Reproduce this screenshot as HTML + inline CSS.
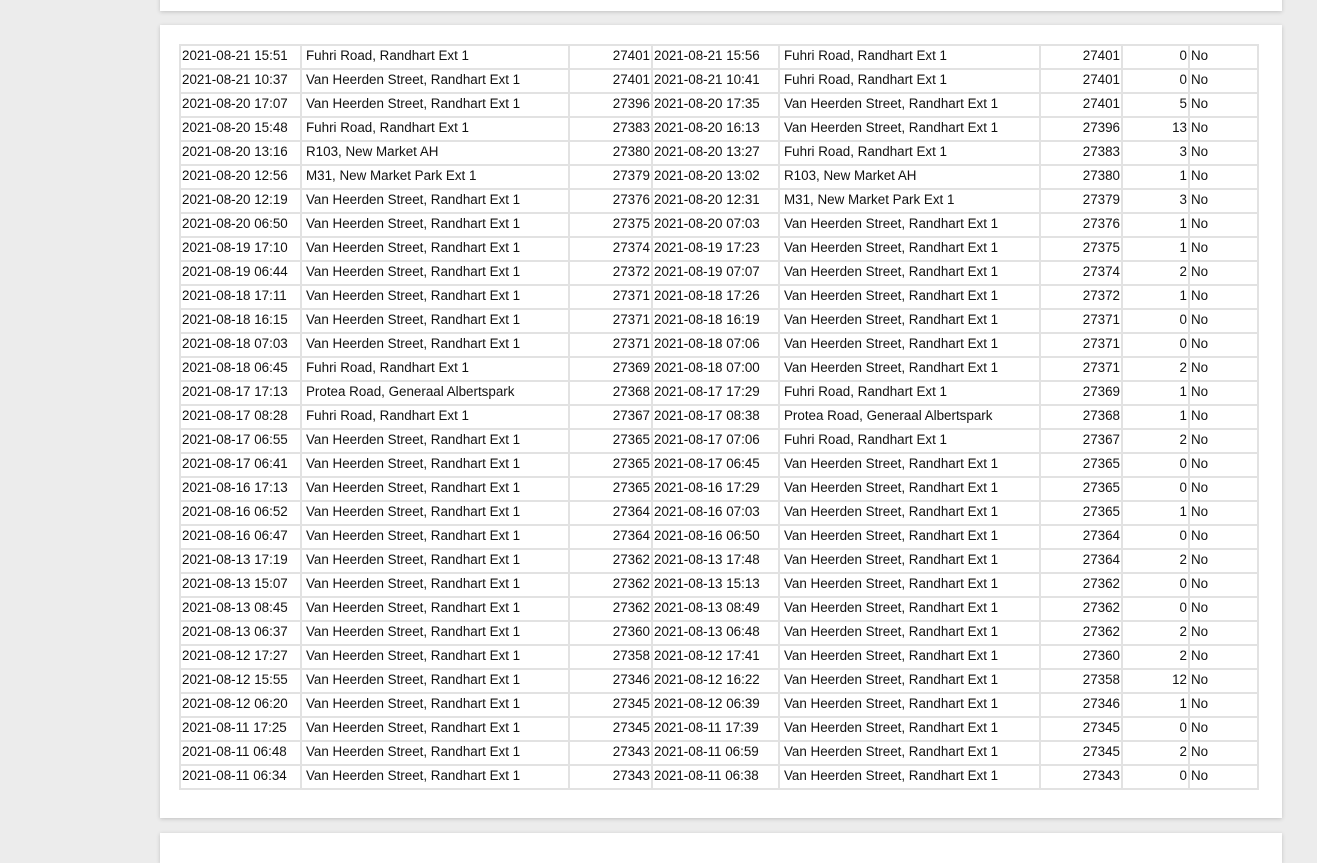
<!DOCTYPE html>
<html><head><meta charset="utf-8"><style>
html,body{margin:0;padding:0;background:#ececec;width:1317px;height:847px;overflow:hidden;font-family:"Liberation Sans",Arial,sans-serif;}
.pg{position:absolute;left:160px;width:1122px;background:#fff;box-shadow:0 1px 4px rgba(0,0,0,.18);}
table{position:absolute;left:179px;top:44px;border-collapse:collapse;table-layout:fixed;font-size:13.4px;color:#111;}
td{border:2px solid #e2e2e2;height:20px;padding:0 1px 2px 1px;white-space:nowrap;overflow:hidden;line-height:19px;vertical-align:top;}
td.r{text-align:right;}
td.a{padding-left:4px;}
</style></head><body>
<div class="pg" style="top:-10px;height:21px"></div>
<div class="pg" style="top:25px;height:793px"></div>
<div class="pg" style="top:833px;height:30px"></div>
<table>
<colgroup><col style="width:121px"><col style="width:268px"><col style="width:83px"><col style="width:127px"><col style="width:261px"><col style="width:82px"><col style="width:67px"><col style="width:69px"></colgroup>
<tbody id="b">
<tr><td>2021-08-21 15:51</td><td class="a">Fuhri Road, Randhart Ext 1</td><td class="r">27401</td><td>2021-08-21 15:56</td><td class="a">Fuhri Road, Randhart Ext 1</td><td class="r">27401</td><td class="r">0</td><td>No</td></tr>
<tr><td>2021-08-21 10:37</td><td class="a">Van Heerden Street, Randhart Ext 1</td><td class="r">27401</td><td>2021-08-21 10:41</td><td class="a">Fuhri Road, Randhart Ext 1</td><td class="r">27401</td><td class="r">0</td><td>No</td></tr>
<tr><td>2021-08-20 17:07</td><td class="a">Van Heerden Street, Randhart Ext 1</td><td class="r">27396</td><td>2021-08-20 17:35</td><td class="a">Van Heerden Street, Randhart Ext 1</td><td class="r">27401</td><td class="r">5</td><td>No</td></tr>
<tr><td>2021-08-20 15:48</td><td class="a">Fuhri Road, Randhart Ext 1</td><td class="r">27383</td><td>2021-08-20 16:13</td><td class="a">Van Heerden Street, Randhart Ext 1</td><td class="r">27396</td><td class="r">13</td><td>No</td></tr>
<tr><td>2021-08-20 13:16</td><td class="a">R103, New Market AH</td><td class="r">27380</td><td>2021-08-20 13:27</td><td class="a">Fuhri Road, Randhart Ext 1</td><td class="r">27383</td><td class="r">3</td><td>No</td></tr>
<tr><td>2021-08-20 12:56</td><td class="a">M31, New Market Park Ext 1</td><td class="r">27379</td><td>2021-08-20 13:02</td><td class="a">R103, New Market AH</td><td class="r">27380</td><td class="r">1</td><td>No</td></tr>
<tr><td>2021-08-20 12:19</td><td class="a">Van Heerden Street, Randhart Ext 1</td><td class="r">27376</td><td>2021-08-20 12:31</td><td class="a">M31, New Market Park Ext 1</td><td class="r">27379</td><td class="r">3</td><td>No</td></tr>
<tr><td>2021-08-20 06:50</td><td class="a">Van Heerden Street, Randhart Ext 1</td><td class="r">27375</td><td>2021-08-20 07:03</td><td class="a">Van Heerden Street, Randhart Ext 1</td><td class="r">27376</td><td class="r">1</td><td>No</td></tr>
<tr><td>2021-08-19 17:10</td><td class="a">Van Heerden Street, Randhart Ext 1</td><td class="r">27374</td><td>2021-08-19 17:23</td><td class="a">Van Heerden Street, Randhart Ext 1</td><td class="r">27375</td><td class="r">1</td><td>No</td></tr>
<tr><td>2021-08-19 06:44</td><td class="a">Van Heerden Street, Randhart Ext 1</td><td class="r">27372</td><td>2021-08-19 07:07</td><td class="a">Van Heerden Street, Randhart Ext 1</td><td class="r">27374</td><td class="r">2</td><td>No</td></tr>
<tr><td>2021-08-18 17:11</td><td class="a">Van Heerden Street, Randhart Ext 1</td><td class="r">27371</td><td>2021-08-18 17:26</td><td class="a">Van Heerden Street, Randhart Ext 1</td><td class="r">27372</td><td class="r">1</td><td>No</td></tr>
<tr><td>2021-08-18 16:15</td><td class="a">Van Heerden Street, Randhart Ext 1</td><td class="r">27371</td><td>2021-08-18 16:19</td><td class="a">Van Heerden Street, Randhart Ext 1</td><td class="r">27371</td><td class="r">0</td><td>No</td></tr>
<tr><td>2021-08-18 07:03</td><td class="a">Van Heerden Street, Randhart Ext 1</td><td class="r">27371</td><td>2021-08-18 07:06</td><td class="a">Van Heerden Street, Randhart Ext 1</td><td class="r">27371</td><td class="r">0</td><td>No</td></tr>
<tr><td>2021-08-18 06:45</td><td class="a">Fuhri Road, Randhart Ext 1</td><td class="r">27369</td><td>2021-08-18 07:00</td><td class="a">Van Heerden Street, Randhart Ext 1</td><td class="r">27371</td><td class="r">2</td><td>No</td></tr>
<tr><td>2021-08-17 17:13</td><td class="a">Protea Road, Generaal Albertspark</td><td class="r">27368</td><td>2021-08-17 17:29</td><td class="a">Fuhri Road, Randhart Ext 1</td><td class="r">27369</td><td class="r">1</td><td>No</td></tr>
<tr><td>2021-08-17 08:28</td><td class="a">Fuhri Road, Randhart Ext 1</td><td class="r">27367</td><td>2021-08-17 08:38</td><td class="a">Protea Road, Generaal Albertspark</td><td class="r">27368</td><td class="r">1</td><td>No</td></tr>
<tr><td>2021-08-17 06:55</td><td class="a">Van Heerden Street, Randhart Ext 1</td><td class="r">27365</td><td>2021-08-17 07:06</td><td class="a">Fuhri Road, Randhart Ext 1</td><td class="r">27367</td><td class="r">2</td><td>No</td></tr>
<tr><td>2021-08-17 06:41</td><td class="a">Van Heerden Street, Randhart Ext 1</td><td class="r">27365</td><td>2021-08-17 06:45</td><td class="a">Van Heerden Street, Randhart Ext 1</td><td class="r">27365</td><td class="r">0</td><td>No</td></tr>
<tr><td>2021-08-16 17:13</td><td class="a">Van Heerden Street, Randhart Ext 1</td><td class="r">27365</td><td>2021-08-16 17:29</td><td class="a">Van Heerden Street, Randhart Ext 1</td><td class="r">27365</td><td class="r">0</td><td>No</td></tr>
<tr><td>2021-08-16 06:52</td><td class="a">Van Heerden Street, Randhart Ext 1</td><td class="r">27364</td><td>2021-08-16 07:03</td><td class="a">Van Heerden Street, Randhart Ext 1</td><td class="r">27365</td><td class="r">1</td><td>No</td></tr>
<tr><td>2021-08-16 06:47</td><td class="a">Van Heerden Street, Randhart Ext 1</td><td class="r">27364</td><td>2021-08-16 06:50</td><td class="a">Van Heerden Street, Randhart Ext 1</td><td class="r">27364</td><td class="r">0</td><td>No</td></tr>
<tr><td>2021-08-13 17:19</td><td class="a">Van Heerden Street, Randhart Ext 1</td><td class="r">27362</td><td>2021-08-13 17:48</td><td class="a">Van Heerden Street, Randhart Ext 1</td><td class="r">27364</td><td class="r">2</td><td>No</td></tr>
<tr><td>2021-08-13 15:07</td><td class="a">Van Heerden Street, Randhart Ext 1</td><td class="r">27362</td><td>2021-08-13 15:13</td><td class="a">Van Heerden Street, Randhart Ext 1</td><td class="r">27362</td><td class="r">0</td><td>No</td></tr>
<tr><td>2021-08-13 08:45</td><td class="a">Van Heerden Street, Randhart Ext 1</td><td class="r">27362</td><td>2021-08-13 08:49</td><td class="a">Van Heerden Street, Randhart Ext 1</td><td class="r">27362</td><td class="r">0</td><td>No</td></tr>
<tr><td>2021-08-13 06:37</td><td class="a">Van Heerden Street, Randhart Ext 1</td><td class="r">27360</td><td>2021-08-13 06:48</td><td class="a">Van Heerden Street, Randhart Ext 1</td><td class="r">27362</td><td class="r">2</td><td>No</td></tr>
<tr><td>2021-08-12 17:27</td><td class="a">Van Heerden Street, Randhart Ext 1</td><td class="r">27358</td><td>2021-08-12 17:41</td><td class="a">Van Heerden Street, Randhart Ext 1</td><td class="r">27360</td><td class="r">2</td><td>No</td></tr>
<tr><td>2021-08-12 15:55</td><td class="a">Van Heerden Street, Randhart Ext 1</td><td class="r">27346</td><td>2021-08-12 16:22</td><td class="a">Van Heerden Street, Randhart Ext 1</td><td class="r">27358</td><td class="r">12</td><td>No</td></tr>
<tr><td>2021-08-12 06:20</td><td class="a">Van Heerden Street, Randhart Ext 1</td><td class="r">27345</td><td>2021-08-12 06:39</td><td class="a">Van Heerden Street, Randhart Ext 1</td><td class="r">27346</td><td class="r">1</td><td>No</td></tr>
<tr><td>2021-08-11 17:25</td><td class="a">Van Heerden Street, Randhart Ext 1</td><td class="r">27345</td><td>2021-08-11 17:39</td><td class="a">Van Heerden Street, Randhart Ext 1</td><td class="r">27345</td><td class="r">0</td><td>No</td></tr>
<tr><td>2021-08-11 06:48</td><td class="a">Van Heerden Street, Randhart Ext 1</td><td class="r">27343</td><td>2021-08-11 06:59</td><td class="a">Van Heerden Street, Randhart Ext 1</td><td class="r">27345</td><td class="r">2</td><td>No</td></tr>
<tr><td>2021-08-11 06:34</td><td class="a">Van Heerden Street, Randhart Ext 1</td><td class="r">27343</td><td>2021-08-11 06:38</td><td class="a">Van Heerden Street, Randhart Ext 1</td><td class="r">27343</td><td class="r">0</td><td>No</td></tr>
</tbody></table>
</body></html>
